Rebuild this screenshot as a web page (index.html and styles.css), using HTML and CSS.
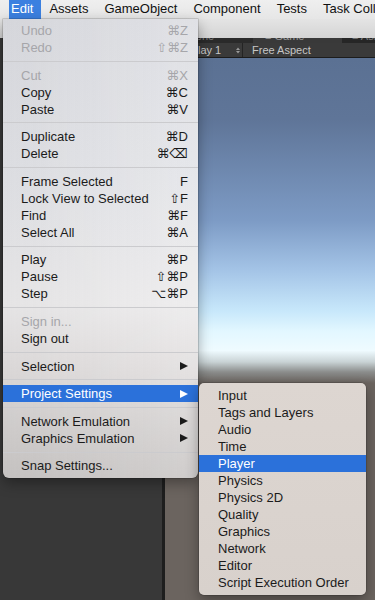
FILE: index.html
```html
<!DOCTYPE html>
<html lang="en">
<head>
  <meta charset="UTF-8" />
  <title>Edit Menu</title>
  <meta name="viewport" content="width=device-width, initial-scale=1.0"/>
  <link rel="stylesheet" href="styles.css">
</head>
<body>

<div class="menubar">
  <span class="open">Edit</span>
  <span>Assets</span>
  <span>GameObject</span>
  <span>Component</span>
  <span>Tests</span>
  <span>Task Collection</span>
</div>

<div class="titlebar"></div>

<div class="panes">
  <div class="hierarchy"></div>
  <div class="divider"></div>
  <div class="scene">
    <div class="tabs">
      <div class="tab tab-scene"><span>Scene</span></div>
      <div class="tab tab-game"><span>&#8801; Game</span></div>
      <div class="tab tab-store"><span>&#8801; Asset Store</span></div>
    </div>
    <div class="toolbar">
      <div class="tool tool-display">
        <span>Display 1</span>
        <svg width="4" height="7" viewBox="0 0 4 7"><polygon points="0,3 2,0.5 4,3" fill="#9a9a9a"/><polygon points="0,4 2,6.5 4,4" fill="#9a9a9a"/></svg>
      </div>
      <div class="tool tool-aspect">Free Aspect</div>
    </div>
    <div class="sky"></div>
    <div class="ground"></div>
  </div>
</div>

<!-- Edit dropdown -->
<div class="menu edit-menu">
  <div class="item off"><span>Undo</span><span class="key">&#8984;Z</span></div>
  <div class="item off"><span>Redo</span><span class="key">&#8679;&#8984;Z</span></div>
  <div class="sep"></div>
  <div class="item off"><span>Cut</span><span class="key">&#8984;X</span></div>
  <div class="item"><span>Copy</span><span class="key">&#8984;C</span></div>
  <div class="item"><span>Paste</span><span class="key">&#8984;V</span></div>
  <div class="sep"></div>
  <div class="item"><span>Duplicate</span><span class="key">&#8984;D</span></div>
  <div class="item"><span>Delete</span><span class="key">&#8984;&#9003;</span></div>
  <div class="sep"></div>
  <div class="item"><span>Frame Selected</span><span class="key">F</span></div>
  <div class="item"><span>Lock View to Selected</span><span class="key">&#8679;F</span></div>
  <div class="item"><span>Find</span><span class="key">&#8984;F</span></div>
  <div class="item"><span>Select All</span><span class="key">&#8984;A</span></div>
  <div class="sep"></div>
  <div class="item"><span>Play</span><span class="key">&#8984;P</span></div>
  <div class="item"><span>Pause</span><span class="key">&#8679;&#8984;P</span></div>
  <div class="item"><span>Step</span><span class="key">&#8997;&#8984;P</span></div>
  <div class="sep"></div>
  <div class="item off"><span>Sign in...</span></div>
  <div class="item"><span>Sign out</span></div>
  <div class="sep"></div>
  <div class="item"><span>Selection</span><span class="arrow"></span></div>
  <div class="sep"></div>
  <div class="item active"><span>Project Settings</span><span class="arrow"></span></div>
  <div class="sep"></div>
  <div class="item"><span>Network Emulation</span><span class="arrow"></span></div>
  <div class="item"><span>Graphics Emulation</span><span class="arrow"></span></div>
  <div class="sep"></div>
  <div class="item"><span>Snap Settings...</span></div>
</div>

<!-- Project Settings submenu -->
<div class="menu submenu">
  <div class="item">Input</div>
  <div class="item">Tags and Layers</div>
  <div class="item">Audio</div>
  <div class="item">Time</div>
  <div class="item active">Player</div>
  <div class="item">Physics</div>
  <div class="item">Physics 2D</div>
  <div class="item">Quality</div>
  <div class="item">Graphics</div>
  <div class="item">Network</div>
  <div class="item">Editor</div>
  <div class="item">Script Execution Order</div>
</div>

</body>
</html>
```

FILE: styles.css
```css
body {
  font-family: "Liberation Sans", "DejaVu Sans", sans-serif;
  font-size: 13px;
  margin: 0;
  width: 375px;
  height: 600px;
  overflow: hidden;
  position: relative;
  background: #383838;
}

/* mac menu bar */
.menubar {
  display: flex;
  height: 19px;
  padding-left: 9px;
  line-height: 18px;
  white-space: nowrap;
  overflow: hidden;
  color: #111;
  background: linear-gradient(#efefef, #e6e6e6);
}

.menubar span {
  padding: 0 8px;
}

.menubar .open {
  padding-left: 2px;
  background: #3b80e0;
  color: #fff;
}

.titlebar {
  height: 19px;
  background: linear-gradient(#e4e4e4, #d4d4d4);
}

/* unity window behind the menus */
.panes {
  display: flex;
  height: 562px;
}

.hierarchy {
  flex: none;
  width: 162px;
  background: #383838;
}

.divider {
  flex: none;
  width: 3px;
  background: #1e1e1e;
}

.scene {
  flex: 1;
  min-width: 0;
  overflow: hidden;
  display: flex;
  flex-direction: column;
}

.tabs {
  display: flex;
  flex: none;
  height: 5px;
  overflow: hidden;
  background: #222;
  font-size: 11px;
  color: #7e7e7e;
}

.tab {
  flex: none;
  line-height: 11px;
  white-space: nowrap;
  overflow: hidden;
  box-sizing: border-box;
}

.tab span {
  display: block;
  margin-top: -7px;
}

.tab-scene { width: 88px; padding-left: 18px; background: #2a2a2a; }
.tab-game { width: 89px; padding-left: 12px; background: #393939; color: #9a9a9a; }
.tab-store { flex: 1; padding-left: 10px; background: #262626; }

.toolbar {
  display: flex;
  flex: none;
  height: 14px;
  line-height: 14px;
  font-size: 11px;
  color: #c6c6c6;
  background: #3a3a3a;
  border-bottom: 1px solid #1c1c1c;
  white-space: nowrap;
}

.tool {
  display: flex;
  flex: none;
  align-items: center;
  box-sizing: border-box;
}

.tool-display {
  width: 78px;
  padding: 0 2px 0 11px;
  justify-content: space-between;
  border-right: 1px solid #242424;
}

.tool-aspect {
  padding-left: 9px;
}

.sky {
  flex: none;
  height: 325px;
  background: linear-gradient(to bottom,
    #5b7193 0%, #5f7598 19%, #7d9bc5 50%, #a3c3e6 65%,
    #c8e8fb 78%, #e2f7ff 84%, #effbff 90%, #c9d3d5 93.5%,
    #8b8d8c 96.6%, #6b645f 100%);
}

.ground {
  flex: 1;
  background: #6b645f;
}

/* dropdown menus */
.menu {
  position: absolute;
  box-sizing: border-box;
  box-shadow: 0 5px 14px rgba(0,0,0,0.35), 0 0 0 0.5px rgba(0,0,0,0.25);
}

.edit-menu {
  left: 3px;
  top: 19px;
  width: 195px;
  padding: 3px 0 4px;
  border-radius: 0 0 6px 6px;
  background:
    linear-gradient(to right, rgba(0,0,0,0.03), rgba(255,255,255,0.12)),
    linear-gradient(to bottom, #dcdde2 0%, #e3e4e8 35%, #ecebec 62%, #e2dfdf 75%, #d3d0cf 90%, #cac7c6 100%);
}

.submenu {
  left: 199px;
  top: 383px;
  width: 167px;
  padding: 4px 0;
  border-radius: 5px;
  background: linear-gradient(#ddd6d1, #d8d1cc);
}

.item {
  display: flex;
  justify-content: space-between;
  align-items: center;
  height: 17px;
  padding: 0 10px 0 18px;
  color: #1b1b1b;
  white-space: nowrap;
}

.submenu .item {
  padding-left: 19px;
}

.item.off {
  color: #a6a6aa;
}

.item.active {
  background: #2b71da;
  color: #fff;
}

.arrow {
  width: 0;
  height: 0;
  border-left: 8px solid currentColor;
  border-top: 4.5px solid transparent;
  border-bottom: 4.5px solid transparent;
}

.sep {
  height: 1px;
  margin: 4.8px 0;
  background: #cbcbce;
}
```
